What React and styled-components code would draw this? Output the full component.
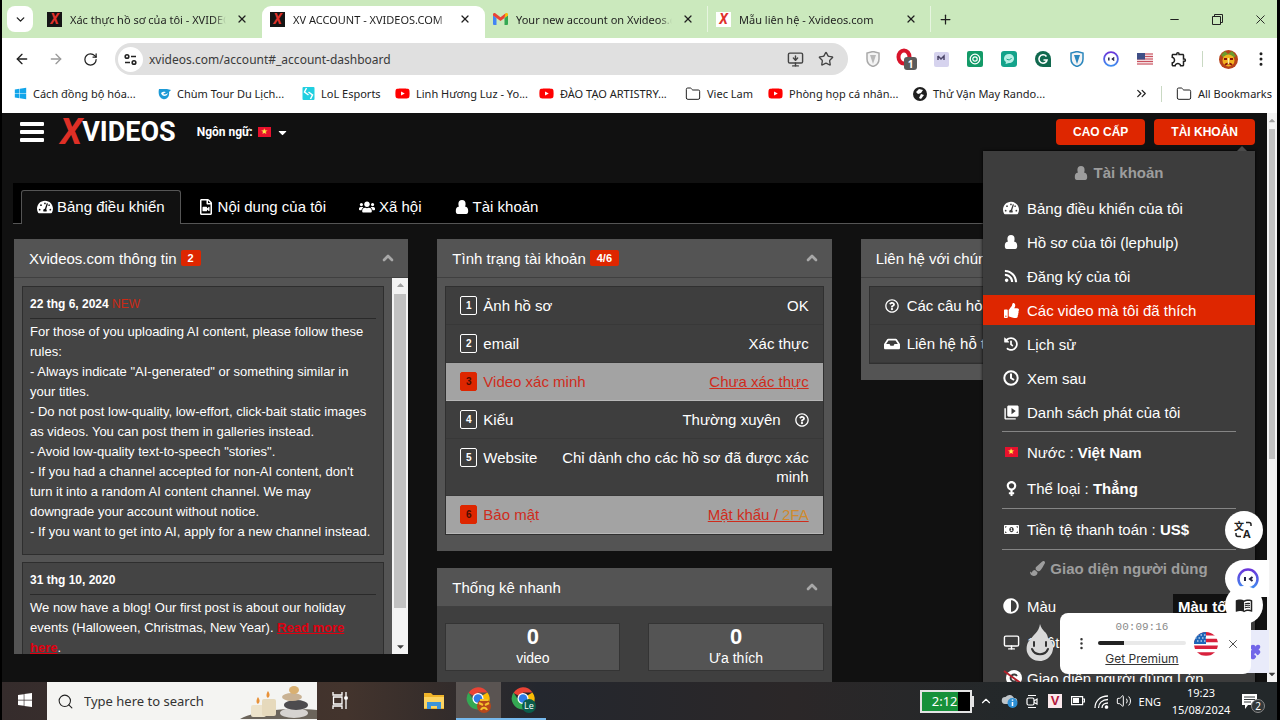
import styled, { createGlobalStyle } from 'styled-components';
import {
    ArrowLeft, ArrowRight, ChevronDown, ChevronUp, ChevronsRight, EllipsisVertical, Folder,
    Monitor, MonitorDown, Minus, Plus, Puzzle, RotateCw, Search, Star, Volume2, X
} from 'lucide-react';
import {
    FaAdjust, FaCaretDown, FaRegFileVideo, FaHistory, FaInbox, FaMoneyBillAlt, FaPaintBrush,
    FaRegQuestionCircle, FaRss, FaTachometerAlt, FaThumbsUp, FaUsers, FaVenus, FaWindows, FaYoutube
} from 'react-icons/fa';
import { MdOutlineExtension, MdOutlineMenuBook, MdVideoLibrary } from 'react-icons/md';

const GlobalStyle = createGlobalStyle`
    *{
        box-sizing: border-box;
    }

    body{
        margin: 0;
        background: #000000;
        font-family: 'Liberation Sans', sans-serif;
    }

    button, input{
        font-family: inherit;
        border: 0;
        padding: 0;
        margin: 0;
        background: none;
        color: inherit;
    }

    svg{
        flex-shrink: 0;
        display: block;
    }
`;

const Screen = styled.div`
    height: 100vh;
    display: flex;
    flex-direction: column;
    overflow: hidden;
`;

// NAVEGADOR
const Browser = styled.div`
    flex: 1;
    min-height: 0;
    margin: 0 3px 0 2px;
    display: flex;
    flex-direction: column;
    background: #FFFFFF;
`;

const TabStrip = styled.div`
    height: 38px;
    padding-left: 5px;
    display: flex;
    align-items: center;
    background: #CBE9BD;
    color: #1F1F1F;
    font-family: 'Noto Sans', sans-serif;
    font-size: 11px;
`;

const TabSearch = styled.button`
    width: 26px;
    height: 26px;
    margin-right: 6px;
    display: grid;
    place-items: center;
    background: #FFFFFF;
    border-radius: 8px;
`;

const BrowserTab = styled.div`
    flex: 0 1 223px;
    min-width: 0;
    height: ${props => props.$active ? '32px' : '26px'};
    align-self: ${props => props.$active ? 'flex-end' : 'center'};
    display: flex;
    align-items: center;
    gap: 8px;
    padding: 0 11px 0 8px;
    padding-bottom: ${props => props.$active ? '6px' : '0'};
    background: ${props => props.$active ? '#FFFFFF' : 'transparent'};
    border-right: ${props => props.$line ? '1px solid #E7F5E0' : '1px solid transparent'};
    border-radius: ${props => props.$active ? '9px 9px 0 0' : '0'};
`;

const TabTitle = styled.span`
    flex: 1;
    min-width: 0;
    overflow: hidden;
    white-space: nowrap;
    mask-image: linear-gradient(to right, #000 92%, transparent);
`;

const TabButton = styled.button`
    width: 16px;
    height: 16px;
    display: grid;
    place-items: center;
`;

const NewTab = styled(TabButton)`
    margin-left: 6px;
`;

const WindowControls = styled.div`
    margin-left: auto;
    display: flex;
    gap: 9px;
`;

const WindowButton = styled.button`
    width: 34px;
    height: 28px;
    display: grid;
    place-items: center;
`;

const Favicon = styled.span`
    width: 15px;
    height: 15px;
    flex-shrink: 0;
    display: grid;
    place-items: center;
    background: ${props => props.$light ? '#FFFFFF' : '#151515'};
    color: #E0322B;
    font: italic bold 14px/15px Roboto, sans-serif;
`;

const Toolbar = styled.div`
    height: 42px;
    padding-left: 3px;
    display: flex;
    align-items: center;
    color: #202020;
`;

const ToolButton = styled.button`
    width: 34px;
    height: 32px;
    display: grid;
    place-items: center;
    color: ${props => props.$muted ? '#9A9A9A' : 'inherit'};
`;

const MoreButton = styled(ToolButton)`
    width: 32px;
`;

const AddressBar = styled.label`
    flex: 1;
    height: 32px;
    margin: 0 8px 0 8px;
    padding: 0 14px 0 3px;
    display: flex;
    align-items: center;
    gap: 14px;
    background: #E0E0E0;
    border-radius: 16px;
    color: #444444;
`;

const SiteInfo = styled.span`
    width: 25px;
    height: 25px;
    display: grid;
    place-items: center;
    background: #FFFFFF;
    border-radius: 50%;
    margin-right: -8px;
`;

const AddressInput = styled.input`
    flex: 1;
    font-family: 'Noto Sans', sans-serif;
    font-size: 12px;
    color: #3A3A3A;
    outline: none;
`;

const Divider = styled.span`
    width: 1px;
    height: 16px;
    margin: 0 8px 0 6px;
    background: #C9D9C3;
`;

const Bookmarks = styled.div`
    height: 33px;
    padding: 0 5px 6px 12px;
    display: flex;
    align-items: center;
    font-family: 'Noto Sans', sans-serif;
    font-size: 11px;
    color: #222222;
`;

const Bookmark = styled.a`
    width: ${props => props.$width};
    display: flex;
    align-items: center;
    gap: 6px;
    color: inherit;
    text-decoration: none;
    white-space: nowrap;
`;

const BookmarksEnd = styled.div`
    margin-left: auto;
    display: flex;
    align-items: center;
    gap: 6px;
`;

// PAGINA
const Viewport = styled.main`
    flex: 1;
    min-height: 0;
    display: flex;
    position: relative;
    background: #111111;
    color: #FFFFFF;
`;

const Page = styled.div`
    flex: 1;
    min-width: 0;
    overflow: hidden;
    padding: 0 12px;
    position: relative;
`;

const Header = styled.header`
    height: 38px;
    padding-left: 6px;
    display: flex;
    align-items: center;
`;

const MenuToggle = styled.button`
    width: 24px;
    height: 20px;
    display: flex;
    flex-direction: column;
    justify-content: space-between;

    span{
        width: 24px;
        height: 4px;
        border-radius: 1px;
        background: #FFFFFF;
    }
`;

const Logo = styled.a`
    margin-left: 16px;
    display: flex;
    align-items: center;
    color: #FFFFFF;
    text-decoration: none;
    font: bold 27px/38px Roboto, sans-serif;

    em{
        font-size: 36px;
        color: #DE2F26;
    }
`;

const Language = styled.button`
    margin-left: 21px;
    display: flex;
    align-items: center;
    gap: 5px;
    font: bold 12px/16px Roboto, sans-serif;
`;

const Flag = styled.span`
    width: 13px;
    height: 10px;
    flex-shrink: 0;
    display: grid;
    place-items: center;
    background: #E8112D;
    color: #FFE94A;
    font: 8px/10px 'DejaVu Sans', sans-serif;
`;

const HeaderActions = styled.div`
    margin-left: auto;
    display: flex;
    gap: 9px;
`;

const RedButton = styled.button`
    height: 26px;
    padding: 0 17px;
    background: #DE2600;
    border-radius: 4px;
    font-size: 12px;
    font-weight: 700;
`;

const Tabs = styled.nav`
    height: 41px;
    margin: 32px 0 15px;
    margin-left: -1px;
    padding: 7px 8px 0;
    display: flex;
    background: #000000;
    border-bottom: 1px solid #555555;
`;

const Tab = styled.a`
    height: 34px;
    padding: 0 15px 2px;
    display: flex;
    align-items: center;
    gap: 4px;
    font-size: 15px;
    color: #FFFFFF;
    text-decoration: none;
    background: ${props => props.$active ? '#111111' : 'transparent'};
    border: 1px solid ${props => props.$active ? '#555555' : 'transparent'};
    border-bottom: 0;
    border-radius: 3px 3px 0 0;
    margin-right: 1px;
`;

const Columns = styled.div`
    display: grid;
    grid-template-columns: repeat(3, minmax(0, 1fr));
    align-items: start;
    gap: 29px;
`;

const Column = styled.div`
    display: flex;
    flex-direction: column;
    gap: 17px;
`;

const Panel = styled.section`
    background: #545454;
`;

const PanelTitle = styled.h2`
    height: 39px;
    margin: 0;
    padding: 0 12px 0 15px;
    display: flex;
    align-items: center;
    gap: 4px;
    border-bottom: 1px solid #404040;
    font-size: 15px;
    font-weight: 400;
    white-space: nowrap;

    svg{
        margin-left: auto;
        color: #A8A8A8;
    }
`;

const Badge = styled.span`
    padding: 0 7px;
    background: #DE2600;
    border-radius: 2px;
    font: bold 11px/16px 'Liberation Sans', sans-serif;
`;

const News = styled.div`
    height: 376px;
    display: flex;
    overflow: hidden;
`;

const Posts = styled.div`
    flex: 1;
    min-width: 0;
    padding: 8px;
    display: flex;
    flex-direction: column;
    gap: 7px;
`;

const Post = styled.article`
    flex-shrink: 0;
    padding: 7px 7px 12px;
    background: #444444;
    border: 1px solid #2E2E2E;
    font-size: 13px;
    line-height: 20px;

    h3{
        margin: 0 0 3px;
        padding-bottom: 4px;
        border-bottom: 1px solid #2A2A2A;
        font-size: 12px;
        line-height: 20px;
    }

    h3 span{
        font-weight: 400;
        color: #CB2A15;
    }

    p{
        margin: 0;
    }

    a{
        font-weight: 700;
        color: #E00010;
    }
`;

const Scrollbar = styled.div`
    width: ${props => props.$width};
    flex-shrink: 0;
    display: flex;
    flex-direction: column;
    align-items: center;
    justify-content: space-between;
    background: #F3F3F3;
    color: #404040;
`;

const ScrollThumb = styled.div`
    align-self: stretch;
    flex: 0 0 ${props => props.$size};
    margin: 0 2px auto;
    background: #C1C1C1;
`;

const ScrollArrow = styled.span`
    height: 16px;
    display: grid;
    place-items: center;
    color: ${props => props.$muted ? '#A0A0A0' : '#404040'};
    rotate: ${props => props.$up ? '180deg' : '0deg'};
`;

const List = styled.div`
    padding: 8px 8px 16px;
`;

const ListBox = styled.ul`
    margin: 0;
    padding: 0;
    list-style: none;
    background: #3E3E3E;
    border: 1px solid #303030;
`;

const StatusRow = styled.li`
    padding: 9px 14px;
    display: flex;
    align-items: flex-start;
    gap: 6px;
    border-bottom: 1px solid ${props => props.$alert ? '#B8B8B8' : '#383838'};
    background: ${props => props.$alert ? '#A3A3A3' : 'transparent'};
    color: ${props => props.$alert ? '#CF2C1C' : '#FFFFFF'};
    font-size: 15px;
    line-height: 19px;
    white-space: nowrap;

    a{
        color: inherit;
    }
`;

const RowIcon = styled.span`
    width: 17px;
    height: 19px;
    display: grid;
    place-items: center;
`;

const Step = styled.span`
    width: 17px;
    height: 19px;
    flex-shrink: 0;
    border: 1px solid ${props => props.$alert ? '#DE2600' : '#FFFFFF'};
    border-radius: 2px;
    background: ${props => props.$alert ? '#DE2600' : 'transparent'};
    color: ${props => props.$alert ? '#4A0D00' : '#FFFFFF'};
    font: bold 10px/17px 'Liberation Sans', sans-serif;
    text-align: center;
`;

const StatusValue = styled.span`
    flex: 1;
    display: flex;
    justify-content: flex-end;
    align-items: center;
    gap: 14px;
    padding-left: 16px;
    text-align: right;
    white-space: normal;
`;

const Orange = styled.span`
    color: #D08A2E;
`;

const Stats = styled.div`
    padding: 16px 8px;
    display: grid;
    grid-template-columns: 1fr 1fr;
    gap: 28px;
    background: #3F3F3F;
`;

const Stat = styled.div`
    height: 48px;
    background: #545454;
    border: 1px solid #343434;
    text-align: center;
    font-size: 14px;
    line-height: 18px;

    strong{
        display: block;
        font-size: 22px;
        line-height: 25px;
    }
`;

// MENU DA CONTA
const AccountMenu = styled.div`
    position: absolute;
    top: 38px;
    right: 12px;
    width: 272px;
    padding-top: 5px;
    background: #3D3D3D;
    box-shadow: 0 0 3px #000000;
    font-size: 15px;

    &::before{
        content: '';
        position: absolute;
        top: -5px;
        right: 8px;
        border: solid transparent;
        border-width: 0 5px 5px;
        border-bottom-color: #4A4A4A;
    }
`;

const MenuTitle = styled.div`
    height: ${props => props.$height};
    display: flex;
    align-items: center;
    justify-content: center;
    gap: 5px;
    font-weight: 700;
    color: #9D9D9D;
`;

const MenuItem = styled.a`
    height: ${props => props.$tall ? '32px' : '30px'};
    margin: 4px 0;
    padding-left: 20px;
    display: flex;
    align-items: center;
    gap: 8px;
    background: ${props => props.$active ? '#DE2600' : 'transparent'};
    color: #FFFFFF;
    text-decoration: none;
    white-space: nowrap;
`;

const MenuIcon = styled.span`
    width: 16px;
    display: grid;
    place-items: center;
`;

const MenuLine = styled.hr`
    height: 1px;
    margin: 0 19px;
    border: 0;
    background: #858585;
`;

const ThemeButton = styled.button`
    align-self: stretch;
    margin: 4px 0 4px auto;
    width: 82px;
    padding-left: 5px;
    background: #111111;
    font-size: 15px;
    font-weight: 700;
    text-align: left;
`;

// ITENS FLUTUANTES
const RoundButton = styled.button`
    position: absolute;
    top: ${props => props.$top};
    right: 14px;
    width: 38px;
    height: 38px;
    display: grid;
    place-items: center;
    background: #FFFFFF;
    border-radius: 50%;
    color: #222222;
`;

const Assistant = styled.button`
    position: absolute;
    top: 447px;
    right: 8px;
    width: 44px;
    height: 37px;
    padding-left: 12px;
    background: #FFFFFF;
    border-radius: 19px 0 0 19px;
`;

const SideCard = styled.div`
    position: absolute;
    top: 517px;
    right: 8px;
    width: 24px;
    height: 43px;
    display: flex;
    align-items: center;
    background: #E9EBFA;
    color: #7266E8;
`;

const Mascot = styled.svg`
    position: absolute;
    top: 510px;
    right: 222px;
`;

const Recorder = styled.div`
    position: absolute;
    top: 500px;
    right: 26px;
    width: 191px;
    height: 61px;
    padding: 0 10px 0 14px;
    display: flex;
    align-items: center;
    gap: 7px;
    background: #FFFFFF;
    border-radius: 8px;
    color: #333333;
`;

const RecorderInfo = styled.div`
    width: 88px;
    margin: 0 1px 0 2px;
    display: flex;
    flex-direction: column;
    align-items: center;
    gap: 7px;

    time{
        font: 11px/13px 'Liberation Mono', monospace;
        color: #8A8A8A;
    }

    a{
        font: 12px/14px Inter, sans-serif;
        color: #333333;
    }
`;

const Progress = styled.div`
    width: 88px;
    height: 4px;
    background: linear-gradient(to right, #222222 30%, #E9E9E9 30%);
    border-radius: 2px;
`;

// BARRA DE TAREFAS
const Taskbar = styled.footer`
    height: 38px;
    margin: 0 3px 0 2px;
    display: flex;
    align-items: stretch;
    background: linear-gradient(to right, #352C2C, #43342D 27%, #352D2B 34%, #24272E 42%, #2B2728 62%, #23282A 80%);
    color: #FFFFFF;
    font-family: 'Noto Sans', sans-serif;
`;

const TaskButton = styled.button`
    width: 45px;
    display: grid;
    place-items: center;
    background: ${props => props.$active ? '#5A5452' : 'transparent'};
    border-bottom: 2px solid ${props => props.$open ? '#76B9ED' : 'transparent'};
`;

const SearchBox = styled.label`
    width: 270px;
    display: flex;
    align-items: center;
    gap: 10px;
    padding-left: 10px;
    background: #F4F4F2;
    color: #222222;

    input{
        flex: 1;
        min-width: 0;
        font-size: 13px;
        outline: none;
    }

    input::placeholder{
        color: #333333;
        opacity: 1;
    }
`;

const PinnedApps = styled.div`
    margin-left: 49px;
    display: flex;
`;

const Tray = styled.div`
    margin-left: auto;
    padding-right: 12px;
    display: flex;
    align-items: center;
    gap: 6px;
    font-size: 11px;
`;

const TrayIcon = styled.button`
    width: 17px;
    display: grid;
    place-items: center;
`;

const Battery = styled.div`
    width: 52px;
    height: 23px;
    padding-right: 12px;
    position: relative;
    background: linear-gradient(to right, #16913A 76%, #000000 76%);
    border: 2px solid #E4E4E4;
    font-size: 13px;
    line-height: 19px;
    text-align: right;

    &::after{
        content: '';
        position: absolute;
        top: 4px;
        right: -4px;
        width: 3px;
        height: 11px;
        background: #E4E4E4;
    }
`;

const VKey = styled.span`
    width: 14px;
    height: 14px;
    display: grid;
    place-items: center;
    background: #FBE9EC;
    color: #B3163A;
    font: bold 13px/14px 'Liberation Sans', sans-serif;
`;

const Clock = styled.time`
    width: 60px;
    margin: 0 4px;
    font-size: 11px;
    line-height: 17px;
    text-align: center;
`;

const Notice = styled.button`
    position: relative;
    width: 24px;
    height: 24px;

    span{
        position: absolute;
        right: 0;
        bottom: 0;
        width: 14px;
        height: 14px;
        border: 1px solid #8A8A8A;
        border-radius: 50%;
        background: #33383A;
        font-size: 10px;
        line-height: 12px;
    }
`;

// ICONES
const UserIcon = ({ size = 14 }) => (
    <svg width={size} height={size} viewBox="0 0 14 14" fill="currentColor">
        <ellipse cx="7" cy="4" rx="3.600" ry="4" />
        <path d="M.8 11c0-2.800 1.200-4.200 3-4.400C4.800 8 5.800 8.500 7 8.500s2.200-.5 3.200-1.900c1.800.2 3 1.600 3 4.400 0 2-.7 3-2 3H2.800c-1.300 0-2-1-2-3z" />
        <path d="M4 6h6v4H4z" />
    </svg>
);

const ClockIcon = () => (
    <svg width="16" height="16" viewBox="0 0 16 16" fill="none" stroke="currentColor" strokeWidth="2">
        <circle cx="8" cy="8" r="6.700" />
        <path d="M8 3.500V8l3 2" />
    </svg>
);

const TranslateIcon = () => (
    <svg width="20" height="20" viewBox="0 0 20 20" fill="none" stroke="#222222" strokeWidth="1.500">
        <text x="0" y="10" fontSize="10" fontWeight="700" fontFamily="Noto Sans CJK SC" fill="#222222" stroke="none">文</text>
        <text x="9" y="18" fontSize="11" fontWeight="700" fontFamily="Open Sans" fill="#222222" stroke="none">A</text>
        <path d="M12 2.500h3a2 2 0 012 2V6M2 13v1.500a2 2 0 002 2h3" />
    </svg>
);

const SignalIcon = () => (
    <svg width="15" height="15" viewBox="0 0 15 15" fill="none" stroke="#FFFFFF" strokeWidth="1.300">
        <path d="M1 14C1 7 6 2 14 2M4.500 14c0-5 4-8.500 9.500-8.500M8 14c0-3 2.500-5 6-5" />
        <circle cx="12.500" cy="13" r="1.200" fill="#FFFFFF" />
    </svg>
);

const GmailIcon = () => (
    <svg width="15" height="12" viewBox="0 0 15 12">
        <path d="M0 2v9a1 1 0 001 1h2.500V5z" fill="#4285F4" />
        <path d="M15 2v9a1 1 0 01-1 1h-2.500V5z" fill="#34A853" />
        <path d="M11.500 1.500V5L15 2.500V1.500C15 .2 13.500-.4 12.400.5z" fill="#FBBC04" />
        <path d="M3.500 1.500V5L0 2.500V1.500C0 .2 1.500-.4 2.600.5L7.500 4.200 12.400.5l-.9 4.500-4 3-4-3z" fill="#EA4335" />
    </svg>
);

const TuneIcon = () => (
    <svg width="15" height="13" viewBox="0 0 15 13" fill="none" stroke="#222222" strokeWidth="1.600">
        <circle cx="4" cy="3.500" r="1.800" />
        <path d="M8 3.500h5M2 9.500h5" />
        <circle cx="11" cy="9.500" r="1.800" />
    </svg>
);

const RestoreIcon = () => (
    <svg width="11" height="11" viewBox="0 0 11 11" fill="none" stroke="#222222">
        <path d="M.5 2.500h8v8h-8zM2.500 2.500v-2h8v8h-2" />
    </svg>
);

const ShieldIcon = ({ color, inner }) => (
    <svg width="14" height="16" viewBox="0 0 14 16">
        <path d="M7 .5l6 1.500v6c0 4-3 6.500-6 7.500-3-1-6-3.500-6-7.500V2z" fill="#F4F4F4" stroke={color} strokeWidth="1.500" />
        <path d="M4 4l3 9 3-9z" fill={inner} />
    </svg>
);

const BlockerIcon = () => (
    <svg width="22" height="22" viewBox="0 0 22 22">
        <ellipse cx="8" cy="9" rx="5.500" ry="6.500" fill="none" stroke="#D8142B" strokeWidth="4" />
        <rect x="8" y="9" width="13" height="13" rx="3" fill="#5B5B5B" />
        <text x="14.500" y="19.500" textAnchor="middle" fontSize="10" fontWeight="700" fontFamily="Open Sans" fill="#FFFFFF">1</text>
    </svg>
);

const MailTileIcon = () => (
    <svg width="15" height="15" viewBox="0 0 15 15">
        <rect width="15" height="15" rx="2" fill="#D6D3EE" />
        <path d="M4 4v4M4 4l3 3 3-3v4" fill="none" stroke="#4B4668" strokeWidth="1.500" />
    </svg>
);

const GreenTileIcon = () => (
    <svg width="16" height="16" viewBox="0 0 16 16" fill="none" stroke="#FFFFFF">
        <rect width="16" height="16" rx="2" fill="#139A68" stroke="none" />
        <circle cx="8" cy="8" r="4.800" strokeWidth="1.300" />
        <circle cx="8" cy="8" r="2.200" strokeWidth="1.200" />
    </svg>
);

const ChatTileIcon = () => (
    <svg width="16" height="16" viewBox="0 0 16 16">
        <rect width="16" height="16" rx="3" fill="#13A38B" />
        <path d="M8 3c3 0 5 2 5 4.500S11 12 8 12l-3.500 1 .5-2C3.500 10 3 9 3 7.500 3 5 5 3 8 3z" fill="#B7EFE5" />
        <path d="M5.500 8c2 1.500 4 1 5-1" fill="none" stroke="#13A38B" />
    </svg>
);

const GrammarIcon = () => (
    <svg width="16" height="16" viewBox="0 0 16 16" fill="none">
        <path d="M8 0a8 8 0 100 16h8V8a8 8 0 00-8-8z" fill="#11694F" />
        <path d="M11.500 5.500A4.200 4.200 0 108 12.200c2 0 3.500-1.300 4-3.200H8.500" stroke="#FFFFFF" strokeWidth="1.600" />
    </svg>
);

const RobotIcon = ({ size = 16 }) => (
    <svg width={size} height={size} viewBox="0 0 22 22">
        <defs>
            <linearGradient id="robot" x1="0" y1="0" x2="0" y2="1">
                <stop offset="0" stopColor="#6A35D9" />
                <stop offset="1" stopColor="#3F8DF0" />
            </linearGradient>
        </defs>
        <circle cx="11" cy="11" r="9.500" fill="#FFFFFF" stroke="url(#robot)" strokeWidth="2.500" />
        <path d="M8 9v4M15.500 9L13 11l2.500 2" stroke="#222244" strokeWidth="2" fill="none" />
    </svg>
);

const UsFlag = () => (
    <svg width="16" height="12" viewBox="0 0 16 12">
        <rect width="16" height="12" fill="#F2D9DC" />
        <path d="M0 1h16M0 3.500h16M0 6h16M0 8.500h16M0 11h16" stroke="#C9525F" strokeWidth="1.200" />
        <rect width="8" height="6.500" fill="#3F4F86" />
    </svg>
);

const RoundUsFlag = () => (
    <svg width="24" height="24" viewBox="0 0 24 24">
        <clipPath id="round"><circle cx="12" cy="12" r="12" /></clipPath>
        <g clipPath="url(#round)">
            <rect width="24" height="24" fill="#FFFFFF" />
            <path d="M0 1.700h24M0 8.500h24M0 15.300h24M0 22h24" stroke="#D8203C" strokeWidth="3.400" />
            <rect width="12" height="12" fill="#1F66B8" />
            <path d="M3 3h9M1 6h11M3 9h9" stroke="#FFFFFF" strokeWidth="1.200" strokeDasharray="1.500 2" />
        </g>
    </svg>
);

const AvatarIcon = () => (
    <svg width="19" height="19" viewBox="0 0 19 19">
        <circle cx="9.500" cy="9.500" r="9.500" fill="#B8431A" />
        <path d="M2 5l4-4 3 3 4-3 4 5-3 2H5z" fill="#6E9A2D" />
        <circle cx="9.500" cy="10.500" r="6" fill="#F2B21F" />
        <path d="M5 9h3M11 9h3M6 15c2-2 5-2 7 0" stroke="#8C1509" strokeWidth="2" fill="none" />
        <path d="M9.500 8v6" stroke="#FFF0A0" strokeWidth="1.500" />
    </svg>
);

const SwirlIcon = () => (
    <svg width="13" height="13" viewBox="0 0 13 13">
        <path d="M1 2h8l4 1-2 2c1 5-3 8-6 7-4-1-5-6-4-10z" fill="#1D9AD6" />
        <path d="M3 6c2-2 5-1 5-1L5 7c2 1 4 0 5-1-1 4-6 4-7 0z" fill="#FFFFFF" />
    </svg>
);

const EsportsIcon = () => (
    <svg width="13" height="13" viewBox="0 0 12 13" fill="none" stroke="#FFFFFF" strokeWidth="1.500">
        <rect width="12" height="13" rx="1" fill="#20CFE0" stroke="none" />
        <path d="M4 1L2 5l4 3M8 12l2-4-4-3" />
    </svg>
);

const GlobeIcon = () => (
    <svg width="14" height="14" viewBox="0 0 14 14">
        <circle cx="7" cy="7" r="7" fill="#1F1F1F" />
        <path d="M6 2l4 1-2 3-3 1-2-2zM8 7l3 1-3 4-2-1 1-2z" fill="#FFFFFF" />
    </svg>
);

const Candles = () => (
    <svg width="77" height="36" viewBox="0 0 77 36">
        <path d="M0 36c14-7 40-12 77-9v9z" fill="#6B645B" />
        <rect x="11" y="22" width="15" height="12" rx="2" fill="#EDE3CB" />
        <rect x="22" y="16" width="14" height="17" rx="2" fill="#E6D9BC" />
        <path d="M18 14c3 4 1 6 0 7-2-1-2-4 0-7zM28 8c3 4 1 6 0 7-2-1-2-4 0-7z" fill="#E8923A" />
        <ellipse cx="54" cy="30" rx="14" ry="5" fill="#D6D3D0" />
        <ellipse cx="56" cy="22" rx="12" ry="5" fill="#4D4B4E" />
        <ellipse cx="52" cy="14" rx="10" ry="4" fill="#C9B294" />
        <ellipse cx="54" cy="7" rx="5" ry="4" fill="#D9B071" />
    </svg>
);

const TaskViewIcon = () => (
    <svg width="16" height="17" viewBox="0 0 16 17" fill="none" stroke="#FFFFFF" strokeWidth="1.300">
        <path d="M1 0v3h9V0M1 17v-3h9v3M1.500 5h8.500v7H1.500zM14 0v4M14 8v9" />
        <circle cx="14" cy="6" r="1.300" fill="#FFFFFF" />
    </svg>
);

const ExplorerIcon = () => (
    <svg width="20" height="17" viewBox="0 0 20 17">
        <path d="M0 1h7l2 2h11v14H0z" fill="#F0B429" />
        <path d="M0 5h20v11H0z" fill="#FCD462" />
        <path d="M3 17V10h14v7h-4v-3H7v3z" fill="#3C93D8" />
    </svg>
);

const ChromeIcon = ({ label }) => (
    <svg width="26" height="28" viewBox="0 0 26 28">
        <path d="M12 12L2.500 7A11 11 0 0121.500 6.500H12z" fill="#EA4335" />
        <path d="M12 12l9.500-5.500A11 11 0 0112 24z" fill="#FBBC04" />
        <path d="M2.500 6.500A11 11 0 0012 23.500l3-8-8-2z" fill="#34A853" />
        <circle cx="12" cy="12.500" r="5.500" fill="#FFFFFF" />
        <circle cx="12" cy="12.500" r="4.300" fill="#2F7BE8" />
        <circle cx="18" cy="20" r="7" fill={label ? '#0B5D4B' : '#B5471B'} />
        {label
            ? <text x="18" y="23" textAnchor="middle" fontSize="9" fontFamily="Open Sans" fill="#FFFFFF">{label}</text>
            : <path d="M13 17l4 2M23 17l-4 2M15 24c1-3 5-3 6 0M14 14h8" stroke="#F5C22B" strokeWidth="2" fill="none" />}
    </svg>
);

const CloudIcon = () => (
    <svg width="17" height="14" viewBox="0 0 17 14">
        <path d="M4 10a3.500 3.500 0 01.500-7A5 5 0 0113 4a3 3 0 01.500 6z" fill="#BFC5C9" />
        <circle cx="11.500" cy="9" r="5" fill="#2D8FD5" />
        <path d="M11.500 8v4M11.500 5.500v1.300" stroke="#FFFFFF" strokeWidth="1.500" />
    </svg>
);

const CameraIcon = () => (
    <svg width="12" height="15" viewBox="0 0 12 15" fill="none" stroke="#FFFFFF" strokeWidth="1.200">
        <path d="M2 1.500h8M2 13.500h8" />
        <rect x="1" y="4" width="7" height="7" rx="1.500" />
        <path d="M8 7l3-2v5L8 8.500" />
    </svg>
);

const PowerIcon = () => (
    <svg width="14" height="10" viewBox="0 0 14 10">
        <path d="M.6.6h11v8H.6zM12 3h1.500v3H12" fill="none" stroke="#FFFFFF" strokeWidth="1.200" />
        <path d="M2 2h6v5H2z" fill="#FFFFFF" />
    </svg>
);

const NoticeIcon = () => (
    <svg width="18" height="17" viewBox="0 0 18 17">
        <path d="M1 1h15v11H7l-3 4v-4H1z" fill="#FFFFFF" />
        <path d="M3 4h11M3 6.500h11M3 9h7" stroke="#33383A" />
    </svg>
);

const CopyrightOffIcon = () => (
    <svg width="20" height="18" viewBox="0 0 20 18" fill="none">
        <circle cx="11" cy="9" r="8" fill="#FFFFFF" />
        <path d="M14 7a3.500 3.500 0 100 4" stroke="#3D3D3D" strokeWidth="2" />
        <path d="M1 2l18 13" stroke="#B3202A" strokeWidth="2" />
    </svg>
);

// DADOS
const browserTabs = [
    { title: 'Xác thực hồ sơ của tôi - XVIDEOS.COM', icon: <Favicon>X</Favicon> },
    { title: 'XV ACCOUNT - XVIDEOS.COM', icon: <Favicon>X</Favicon>, active: true },
    { title: 'Your new account on Xvideos.com', icon: <GmailIcon />, line: true },
    { title: 'Mẫu liên hệ - Xvideos.com', icon: <Favicon $light>X</Favicon>, line: true }
];

const extensions = [
    { name: 'Shield', icon: <ShieldIcon color="#A9A9A9" inner="#B9B9B9" /> },
    { name: 'Blocker', icon: <BlockerIcon /> },
    { name: 'Mail', icon: <MailTileIcon /> },
    { name: 'Recorder', icon: <GreenTileIcon /> },
    { name: 'Chat', icon: <ChatTileIcon /> },
    { name: 'Grammar', icon: <GrammarIcon /> },
    { name: 'VPN', icon: <ShieldIcon color="#2A86BD" inner="#2A86BD" /> },
    { name: 'Assistant', icon: <RobotIcon /> },
    { name: 'Translate', icon: <UsFlag /> },
    { name: 'Extensions', icon: <MdOutlineExtension size={18} /> }
];

const bookmarks = [
    { title: 'Cách đồng bộ hóa...', width: '144px', icon: <FaWindows size={13} color="#12A5EA" /> },
    { title: 'Chùm Tour Du Lịch...', width: '144px', icon: <SwirlIcon /> },
    { title: 'LoL Esports', width: '93px', icon: <EsportsIcon /> },
    { title: 'Linh Hương Luz - Yo...', width: '144px', icon: <FaYoutube size={15} color="#FF0000" /> },
    { title: 'ĐÀO TẠO ARTISTRY...', width: '146px', icon: <FaYoutube size={15} color="#FF0000" /> },
    { title: 'Viec Lam', width: '83px', icon: <Folder size={16} strokeWidth={1.500} /> },
    { title: 'Phòng họp cá nhân...', width: '145px', icon: <FaYoutube size={15} color="#FF0000" /> },
    { title: 'Thử Vận May Rando...', width: '150px', icon: <GlobeIcon /> }
];

const rules = [
    'For those of you uploading AI content, please follow these rules:',
    '- Always indicate "AI-generated" or something similar in your titles.',
    '- Do not post low-quality, low-effort, click-bait static images as videos. You can post them in galleries instead.',
    '- Avoid low-quality text-to-speech "stories".',
    '- If you had a channel accepted for non-AI content, don\'t turn it into a random AI content channel. We may downgrade your account without notice.',
    '- If you want to get into AI, apply for a new channel instead.'
];

const statusRows = [
    { label: 'Ảnh hồ sơ', value: 'OK' },
    { label: 'email', value: 'Xác thực' },
    { label: 'Video xác minh', value: <a href="#verify">Chưa xác thực</a>, alert: true },
    { label: 'Kiểu', value: <>Thường xuyên <FaRegQuestionCircle size={14} /></> },
    { label: 'Website', value: 'Chỉ dành cho các hồ sơ đã được xác minh' },
    { label: 'Bảo mật', value: <a href="#security">Mật khẩu / <Orange>2FA</Orange></a>, alert: true }
];

const menuItems = [
    { label: 'Bảng điều khiển của tôi', icon: <FaTachometerAlt size={16} /> },
    { label: 'Hồ sơ của tôi (lephulp)', icon: <UserIcon /> },
    { label: 'Đăng ký của tôi', icon: <FaRss size={14} /> },
    { label: 'Các video mà tôi đã thích', icon: <FaThumbsUp size={15} />, active: true },
    { label: 'Lịch sử', icon: <FaHistory size={14} /> },
    { label: 'Xem sau', icon: <ClockIcon /> },
    { label: 'Danh sách phát của tôi', icon: <MdVideoLibrary size={17} /> }
];

export default function App() {
    return(
        <Screen>
            <GlobalStyle />
            <Browser>
                <TabStrip>
                    <TabSearch aria-label="Search tabs"><ChevronDown size={13} strokeWidth={2.500} /></TabSearch>
                    {browserTabs.map((tab) => (
                        <BrowserTab key={tab.title} $active={tab.active} $line={tab.line}>
                            {tab.icon}
                            <TabTitle>{tab.title}</TabTitle>
                            <TabButton aria-label="Close tab"><X size={12} strokeWidth={2.500} /></TabButton>
                        </BrowserTab>
                    ))}
                    <NewTab aria-label="New tab"><Plus size={15} /></NewTab>
                    <WindowControls>
                        <WindowButton aria-label="Minimize"><Minus size={13} /></WindowButton>
                        <WindowButton aria-label="Restore"><RestoreIcon /></WindowButton>
                        <WindowButton aria-label="Close"><X size={15} strokeWidth={1.500} /></WindowButton>
                    </WindowControls>
                </TabStrip>

                <Toolbar>
                    <ToolButton aria-label="Back"><ArrowLeft size={16} /></ToolButton>
                    <ToolButton aria-label="Forward" $muted><ArrowRight size={16} /></ToolButton>
                    <ToolButton aria-label="Reload"><RotateCw size={15} /></ToolButton>
                    <AddressBar>
                        <SiteInfo><TuneIcon /></SiteInfo>
                        <AddressInput aria-label="Address" defaultValue="xvideos.com/account#_account-dashboard" />
                        <MonitorDown size={17} />
                        <Star size={16} />
                    </AddressBar>
                    {extensions.map((item) => (
                        <ToolButton key={item.name} aria-label={item.name}>{item.icon}</ToolButton>
                    ))}
                    <Divider />
                    <ToolButton aria-label="Profile"><AvatarIcon /></ToolButton>
                    <MoreButton aria-label="Menu"><EllipsisVertical size={18} /></MoreButton>
                </Toolbar>

                <Bookmarks>
                    {bookmarks.map((item) => (
                        <Bookmark key={item.title} href="#" $width={item.width}>{item.icon}{item.title}</Bookmark>
                    ))}
                    <BookmarksEnd>
                        <ChevronsRight size={15} />
                        <Divider />
                        <Bookmark href="#"><Folder size={16} strokeWidth={1.500} />All Bookmarks</Bookmark>
                    </BookmarksEnd>
                </Bookmarks>

                <Viewport>
                    <Page>
                        <Header>
                            <MenuToggle aria-label="Menu"><span /><span /><span /></MenuToggle>
                            <Logo href="#"><em>X</em>VIDEOS</Logo>
                            <Language>Ngôn ngữ: <Flag>★</Flag><FaCaretDown size={13} /></Language>
                            <HeaderActions>
                                <RedButton>CAO CẤP</RedButton>
                                <RedButton>TÀI KHOẢN</RedButton>
                            </HeaderActions>
                        </Header>

                        <Tabs>
                            <Tab href="#dashboard" $active><FaTachometerAlt size={16} />Bảng điều khiển</Tab>
                            <Tab href="#content"><FaRegFileVideo size={16} />Nội dung của tôi</Tab>
                            <Tab href="#social"><FaUsers size={16} />Xã hội</Tab>
                            <Tab href="#account"><UserIcon />Tài khoản</Tab>
                        </Tabs>

                        <Columns>
                            <Panel>
                                <PanelTitle>Xvideos.com thông tin <Badge>2</Badge><ChevronUp size={16} strokeWidth={4} /></PanelTitle>
                                <News>
                                    <Posts>
                                        <Post>
                                            <h3>22 thg 6, 2024 <span>NEW</span></h3>
                                            {rules.map((rule) => <p key={rule}>{rule}</p>)}
                                        </Post>
                                        <Post>
                                            <h3>31 thg 10, 2020</h3>
                                            <p>We now have a blog! Our first post is about our holiday events (Halloween, Christmas, New Year). <a href="#blog">Read more here</a>.</p>
                                        </Post>
                                    </Posts>
                                    <Scrollbar $width="16px">
                                        <ScrollArrow $up $muted><FaCaretDown size={11} /></ScrollArrow>
                                        <ScrollThumb $size="314px" />
                                        <ScrollArrow><FaCaretDown size={11} /></ScrollArrow>
                                    </Scrollbar>
                                </News>
                            </Panel>

                            <Column>
                                <Panel>
                                    <PanelTitle>Tình trạng tài khoản <Badge>4/6</Badge><ChevronUp size={16} strokeWidth={4} /></PanelTitle>
                                    <List>
                                        <ListBox>
                                            {statusRows.map((row, index) => (
                                                <StatusRow key={row.label} $alert={row.alert}>
                                                    <Step $alert={row.alert}>{index + 1}</Step>
                                                    {row.label}
                                                    <StatusValue>{row.value}</StatusValue>
                                                </StatusRow>
                                            ))}
                                        </ListBox>
                                    </List>
                                </Panel>
                                <Panel>
                                    <PanelTitle>Thống kê nhanh <ChevronUp size={16} strokeWidth={4} /></PanelTitle>
                                    <Stats>
                                        <Stat><strong>0</strong>video</Stat>
                                        <Stat><strong>0</strong>Ưa thích</Stat>
                                    </Stats>
                                </Panel>
                            </Column>

                            <Panel>
                                <PanelTitle>Liên hệ với chúng tôi</PanelTitle>
                                <List>
                                    <ListBox>
                                        <StatusRow><RowIcon><FaRegQuestionCircle size={14} /></RowIcon>Các câu hỏi thường gặp</StatusRow>
                                        <StatusRow><RowIcon><FaInbox size={16} /></RowIcon>Liên hệ hỗ trợ</StatusRow>
                                    </ListBox>
                                </List>
                            </Panel>
                        </Columns>

                        <AccountMenu>
                            <MenuTitle $height="33px"><UserIcon />Tài khoản</MenuTitle>
                            {menuItems.map((item) => (
                                <MenuItem key={item.label} href="#" $active={item.active}>
                                    <MenuIcon>{item.icon}</MenuIcon>{item.label}
                                </MenuItem>
                            ))}
                            <MenuLine />
                            <MenuItem href="#" $tall><MenuIcon><Flag>★</Flag></MenuIcon><span>Nước : <b>Việt Nam</b></span></MenuItem>
                            <MenuItem href="#" $tall><MenuIcon><FaVenus size={17} /></MenuIcon><span>Thể loại : <b>Thẳng</b></span></MenuItem>
                            <MenuLine />
                            <MenuItem href="#" $tall><MenuIcon><FaMoneyBillAlt size={15} /></MenuIcon><span>Tiền tệ thanh toán : <b>US$</b></span></MenuItem>
                            <MenuLine />
                            <MenuTitle $height="36px"><FaPaintBrush size={15} />Giao diện người dùng</MenuTitle>
                            <MenuItem as="div" $tall><MenuIcon><FaAdjust size={16} /></MenuIcon>Màu<ThemeButton>Màu tối</ThemeButton></MenuItem>
                            <MenuItem href="#" $tall><MenuIcon><Monitor size={17} /></MenuIcon>1 cột</MenuItem>
                            <MenuItem href="#" $tall><MenuIcon><CopyrightOffIcon /></MenuIcon>Giao diện người dùng Lớn</MenuItem>
                        </AccountMenu>
                    </Page>
                    <Scrollbar $width="10px">
                        <ScrollArrow $up $muted><FaCaretDown size={10} /></ScrollArrow>
                        <ScrollThumb $size="330px" />
                        <ScrollArrow><FaCaretDown size={10} /></ScrollArrow>
                    </Scrollbar>

                    <RoundButton $top="398px" aria-label="Translate"><TranslateIcon /></RoundButton>
                    <Assistant aria-label="Assistant"><RobotIcon size={22} /></Assistant>
                    <RoundButton $top="473px" aria-label="Reader"><MdOutlineMenuBook size={18} /></RoundButton>
                    <SideCard><Puzzle size={16} fill="#7266E8" /></SideCard>
                    <Mascot width="30" height="40" viewBox="0 0 30 40">
                        <path d="M15 1c2 8 7 7 8 14 6 3 6 10 4 15-3 6-8 8-12 8-6 0-11-3-13-9-1-5 0-10 4-13C8 12 14 9 15 1z" fill="#D9D9D9" />
                        <path d="M7 26c3 7 13 7 16 0M9 19v4M21 19v4" fill="none" stroke="#333333" strokeWidth="2" strokeLinecap="round" />
                    </Mascot>
                    <Recorder>
                        <EllipsisVertical size={15} />
                        <RecorderInfo>
                            <time>00:09:16</time>
                            <Progress />
                            <a href="#premium">Get Premium</a>
                        </RecorderInfo>
                        <RoundUsFlag />
                        <TabButton aria-label="Close"><X size={14} strokeWidth={1.500} /></TabButton>
                    </Recorder>
                </Viewport>
            </Browser>

            <Taskbar>
                <TaskButton aria-label="Start"><FaWindows size={16} /></TaskButton>
                <SearchBox>
                    <Search size={17} strokeWidth={1.500} />
                    <input type="text" aria-label="Search" placeholder="Type here to search" />
                    <Candles />
                </SearchBox>
                <TaskButton aria-label="Task view"><TaskViewIcon /></TaskButton>
                <PinnedApps>
                    <TaskButton aria-label="Files"><ExplorerIcon /></TaskButton>
                    <TaskButton aria-label="Chrome" $active $open><ChromeIcon /></TaskButton>
                    <TaskButton aria-label="Chrome profile" $open><ChromeIcon label="Le" /></TaskButton>
                </PinnedApps>
                <Tray>
                    <Battery>2:12</Battery>
                    <TrayIcon aria-label="Show hidden icons"><ChevronUp size={14} /></TrayIcon>
                    <TrayIcon aria-label="Cloud"><CloudIcon /></TrayIcon>
                    <TrayIcon aria-label="Camera"><CameraIcon /></TrayIcon>
                    <TrayIcon aria-label="Keyboard"><VKey>V</VKey></TrayIcon>
                    <TrayIcon aria-label="Power"><PowerIcon /></TrayIcon>
                    <TrayIcon aria-label="Network"><SignalIcon /></TrayIcon>
                    <TrayIcon aria-label="Volume"><Volume2 size={16} strokeWidth={1.500} /></TrayIcon>
                    <span>ENG</span>
                    <Clock>19:23<br />15/08/2024</Clock>
                    <Notice aria-label="Notifications"><NoticeIcon /><span>2</span></Notice>
                </Tray>
            </Taskbar>
        </Screen>
    );
}
